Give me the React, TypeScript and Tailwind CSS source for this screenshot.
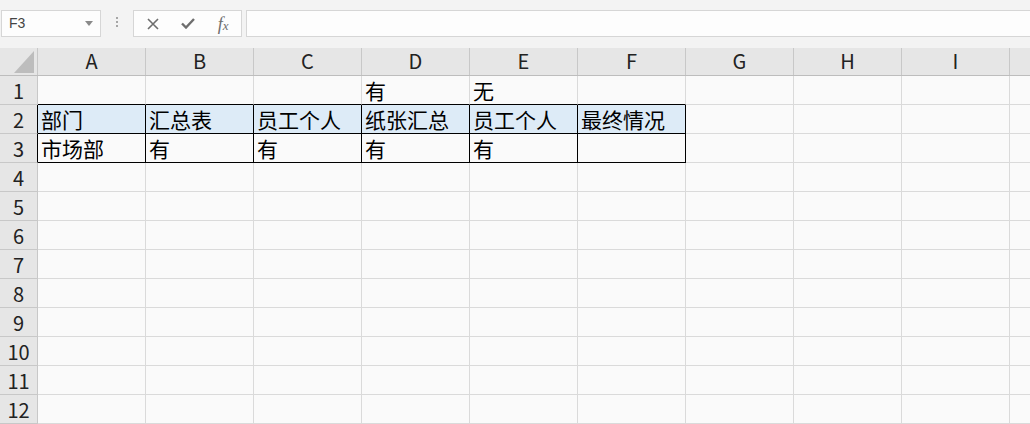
const cols = ['A', 'B', 'C', 'D', 'E', 'F', 'G', 'H', 'I']

const data: Record<number, string[]> = {
  1: ['', '', '', '有', '无', ''],
  2: ['部门', '汇总表', '员工个人', '纸张汇总', '员工个人', '最终情况'],
  3: ['市场部', '有', '有', '有', '有', ''],
}

const rows = Array.from({ length: 12 }, (_, i) => i + 1)

const font = { fontFamily: '"Noto Sans CJK SC", "Noto Sans", sans-serif' }

function Toolbar() {
  return (
    <div className="flex h-[48px] items-start bg-[#f3f3f3] pt-[10px]">
      <div className="ml-[1px] flex h-[27px] w-[100px] items-center justify-between border border-[#d6d6d6] bg-[#fdfdfd] pl-[7px] pr-[7px]">
        <span className="text-[14px] text-[#444]" style={{ fontFamily: '"Liberation Sans", sans-serif' }}>
          F3
        </span>
        <svg width="8" height="5" viewBox="0 0 8 5">
          <path d="M0 0 L8 0 L4 5 Z" fill="#8a8a8a" />
        </svg>
      </div>
      <div className="flex w-[32px] flex-col items-center gap-[2px] pt-[7px]">
        <span className="h-[2px] w-[2px] bg-[#a6a6a6]" />
        <span className="h-[2px] w-[2px] bg-[#a6a6a6]" />
        <span className="h-[2px] w-[2px] bg-[#a6a6a6]" />
      </div>
      <div className="flex h-[27px] w-[109px] items-center border border-[#d6d6d6] bg-[#fdfdfd]">
        <div className="flex w-[36px] justify-center pl-[2px]">
          <svg width="12" height="12" viewBox="0 0 12 12">
            <path d="M1 1 L11 11 M11 1 L1 11" stroke="#6e6e6e" strokeWidth="1.6" />
          </svg>
        </div>
        <div className="flex w-[36px] justify-center">
          <svg width="14" height="11" viewBox="0 0 14 11">
            <path d="M1 5.5 L5 9.5 L13 1" stroke="#6e6e6e" strokeWidth="2.4" fill="none" />
          </svg>
        </div>
        <div className="flex w-[36px] justify-center">
          <span
            className="text-[18px] italic leading-none text-[#6e6e6e]"
            style={{ fontFamily: '"Liberation Serif", serif' }}
          >
            f<span className="text-[13px]">x</span>
          </span>
        </div>
      </div>
      <div className="ml-[4px] h-[27px] flex-1 border border-r-0 border-[#d6d6d6] bg-[#fdfdfd]" />
    </div>
  )
}

function HeaderRow() {
  return (
    <div className="flex h-[28px] border-b border-[#bdbdbd] bg-[#e6e6e6]" style={font}>
      <div className="relative w-[38px] border-r border-[#c8c8c8]">
        <svg className="absolute left-[14px] top-[3px]" width="20" height="22" viewBox="0 0 20 22">
          <path d="M20 0 L20 22 L0 22 Z" fill="#bdbdbd" />
        </svg>
      </div>
      {cols.map((c) => (
        <div
          key={c}
          className="flex w-[108px] items-end justify-center border-r border-[#c8c8c8] pb-[1px] text-[20px] leading-[26px] text-[#222]"
        >
          {c}
        </div>
      ))}
      <div className="flex-1" />
    </div>
  )
}

function Row({ r }: { r: number }) {
  const inTable = r === 2 || r === 3
  const values = data[r] ?? []
  return (
    <div className="flex h-[29px]" style={font}>
      <div
        className={
          inTable
            ? 'flex w-[38px] items-end justify-center border-r border-b border-r-black border-b-[#c8c8c8] bg-[#e6e6e6] text-[20px] leading-[27px] text-[#222]'
            : 'flex w-[38px] items-end justify-center border-r border-b border-[#c8c8c8] bg-[#e6e6e6] text-[20px] leading-[27px] text-[#222]'
        }
      >
        {r}
      </div>
      {cols.map((c, ci) => {
        const tableCol = ci < 6
        const right = inTable && tableCol ? 'border-r-black' : 'border-r-[#dadada]'
        const bottom = r <= 3 && tableCol ? 'border-b-black' : 'border-b-[#dadada]'
        const bg = r === 2 && tableCol ? 'bg-[#ddebf7]' : 'bg-[#fafafa]'
        return (
          <div
            key={c}
            className={`flex w-[108px] items-end overflow-hidden whitespace-nowrap border-r border-b pl-[3px] text-[21px] leading-[27px] text-black ${right} ${bottom} ${bg}`}
          >
            {values[ci] ?? ''}
          </div>
        )
      })}
      <div className="flex-1 border-b border-[#dadada] bg-[#fafafa]" />
    </div>
  )
}

export default function App() {
  return (
    <div className="h-[424px] w-[1030px] overflow-hidden bg-[#fafafa]">
      <Toolbar />
      <HeaderRow />
      {rows.map((r) => (
        <Row key={r} r={r} />
      ))}
    </div>
  )
}
